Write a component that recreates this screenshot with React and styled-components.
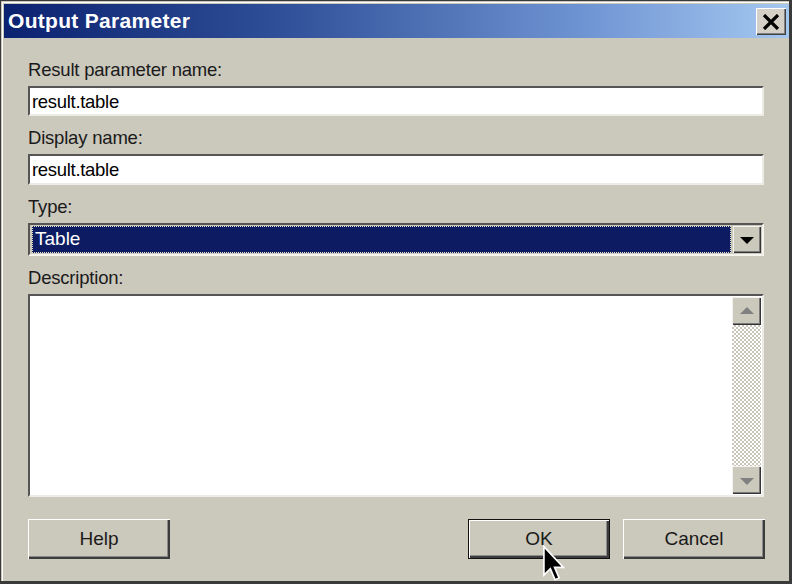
import styled, { createGlobalStyle } from "styled-components";

const Global = createGlobalStyle`
    html, body {
        margin: 0;
        padding: 0;
        background: #ffffff;
    }
    * {
        box-sizing: border-box;
    }
`

export default function App() {
    return (
        <>
            <Global />
            <Window>
                <TitleBar>
                    <Title>Output Parameter</Title>
                    <CloseButton aria-label="close">
                        <svg width="18" height="16" viewBox="0 0 18 16">
                            <path d="M2 1 L16 15 M16 1 L2 15" stroke="#000" strokeWidth="3.2" />
                        </svg>
                    </CloseButton>
                </TitleBar>
                <Body>
                    <Field>
                        <Label>Result parameter name:</Label>
                        <TextBox $h={30}>result.table</TextBox>
                    </Field>
                    <Field>
                        <Label>Display name:</Label>
                        <TextBox $h={31}>result.table</TextBox>
                    </Field>
                    <Field>
                        <Label>Type:</Label>
                        <Select>
                            <Selected>Table</Selected>
                            <ArrowButton $w={28} $h={27}>
                                <Triangle $down $color="#000" />
                            </ArrowButton>
                        </Select>
                    </Field>
                    <Field>
                        <Label>Description:</Label>
                        <TextArea>
                            <Blank />
                            <ScrollBar>
                                <ArrowButton $w={29} $h={28}>
                                    <Triangle $color="#808080" />
                                </ArrowButton>
                                <Track />
                                <ArrowButton $w={29} $h={28}>
                                    <Triangle $down $color="#808080" />
                                </ArrowButton>
                            </ScrollBar>
                        </TextArea>
                    </Field>
                    <ButtonRow>
                        <Button>Help</Button>
                        <Spacer />
                        <Button $default>OK</Button>
                        <Button>Cancel</Button>
                    </ButtonRow>
                </Body>
                <Cursor width="22" height="38" viewBox="0 0 12 20">
                    <path d="M0.5 0.5 L0.5 16 L4 12.6 L6.6 18.6 L8.8 17.6 L6.3 11.8 L11 11.8 Z" fill="#000" stroke="#fff" strokeWidth="0.9" />
                </Cursor>
            </Window>
        </>
    )
}

const Window = styled.div`
    position: relative;
    width: 792px;
    height: 584px;
    background: #cbc8bc;
    border: 1px solid #3a3a3a;
    border-right-width: 3px;
    border-bottom-width: 3px;
    box-shadow: inset 1px 1px 0 #c9c6bb, inset 2px 2px 0 #ffffff;
    padding: 3px 0 0 3px;
    display: flex;
    flex-direction: column;
    font-family: "Liberation Sans", Arial, sans-serif;
    overflow: hidden;
`

const TitleBar = styled.div`
    height: 34px;
    background: linear-gradient(to right, #0b2270 0%, #2f4f98 35%, #7196d4 75%, #a5c8f0 100%);
    display: flex;
    align-items: center;
    justify-content: space-between;
    padding: 0 3px 0 4px;
`

const Title = styled.span`
    color: #ffffff;
    font-family: "Liberation Sans", Arial, sans-serif;
    font-weight: 700;
    font-size: 21px;
    letter-spacing: 0.3px;
`

const CloseButton = styled.button`
    width: 30px;
    height: 27px;
    padding: 0;
    margin-top: 1px;
    display: flex;
    align-items: center;
    justify-content: center;
    background: #d4d0c8;
    border: none;
    box-shadow: inset 1px 1px 0 #ffffff, inset -1px -1px 0 #404040, inset -2px -2px 0 #808080;
`

const Body = styled.div`
    flex: 1;
    display: flex;
    flex-direction: column;
    padding: 21px 24px 0 24px;
`

const Field = styled.div`
    display: flex;
    flex-direction: column;
    margin-bottom: 11px;
`

const Label = styled.div`
    font-size: 18.5px;
    line-height: 22px;
    color: #1a1a1a;
    margin-bottom: 5px;
    padding-left: 0;
    letter-spacing: -0.2px;
`

const TextBox = styled.div`
    height: ${p => p.$h}px;
    width: 736px;
    background: #ffffff;
    border-top: 2px solid #555555;
    border-left: 2px solid #555555;
    border-bottom: 2px solid #ecebe5;
    border-right: 2px solid #ecebe5;
    padding: 2px 0 0 2px;
    font-size: 18.5px;
    line-height: 23px;
    letter-spacing: -0.3px;
    color: #000000;
`

const Select = styled.div`
    height: 33px;
    width: 736px;
    display: flex;
    align-items: center;
    gap: 2px;
    background: #cbc8bc;
    border-top: 2px solid #555555;
    border-left: 2px solid #555555;
    border-bottom: 2px solid #f4f3ee;
    border-right: 2px solid #f4f3ee;
    padding: 1px 1px 1px 2px;
`

const Selected = styled.div`
    flex: 1;
    height: 100%;
    background: #0c1b62;
    outline: 1px dotted #e7e2c6;
    outline-offset: -1px;
    color: #ffffff;
    font-size: 19px;
    line-height: 26px;
    padding-left: 3px;
`

const ArrowButton = styled.div`
    width: ${p => p.$w}px;
    height: ${p => p.$h}px;
    flex: none;
    display: flex;
    align-items: center;
    justify-content: center;
    background: #cbc8bc;
    box-shadow: inset 1px 1px 0 #f2f1ec, inset -1px -1px 0 #333333, inset -2px -2px 0 #7b7b7b;
`

const Triangle = styled.div`
    width: 0;
    height: 0;
    border-left: 7px solid transparent;
    border-right: 7px solid transparent;
    ${p => p.$down
        ? `border-top: 7px solid ${p.$color}; margin-top: 2px;`
        : `border-bottom: 7px solid ${p.$color}; margin-bottom: 2px;`}
`

const TextArea = styled.div`
    height: 203px;
    width: 736px;
    display: flex;
    background: #ffffff;
    border-top: 2px solid #555555;
    border-left: 2px solid #555555;
    border-bottom: 2px solid #ecebe5;
    border-right: 2px solid #ecebe5;
    padding: 1px 1px 1px 0;
`

const Blank = styled.div`
    flex: 1;
`

const ScrollBar = styled.div`
    width: 29px;
    display: flex;
    flex-direction: column;
`

const Track = styled.div`
    flex: 1;
    background-color: #ffffff;
    background-image: repeating-conic-gradient(#c9c6ba 0% 25%, #ffffff 0% 50%);
    background-size: 4px 4px;
`

const ButtonRow = styled.div`
    display: flex;
    gap: 13px;
    margin-top: 11px;
`

const Spacer = styled.div`
    flex: 1;
`

const Button = styled.div`
    width: 142px;
    height: 40px;
    display: flex;
    align-items: center;
    justify-content: center;
    font-size: 19px;
    color: #1a1a1a;
    background: #cbc8bc;
    border: ${p => p.$default ? "1px solid #111111" : "none"};
    box-shadow: inset 1px 1px 0 #ffffff, inset -2px -2px 0 #3c3c3c, inset -3px -3px 0 #8a8a8a;
`

const Cursor = styled.svg`
    position: absolute;
    left: 542px;
    top: 544px;
`
